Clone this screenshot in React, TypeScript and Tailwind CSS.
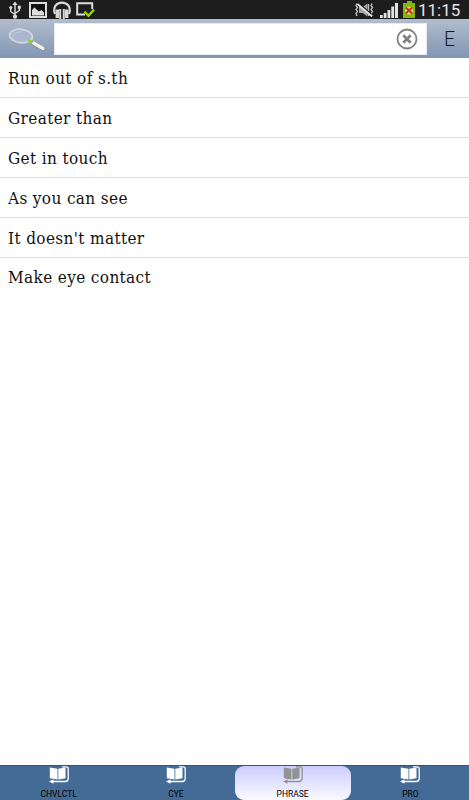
import clsx from 'clsx'

const phrases = [
    'Run out of s.th',
    'Greater than',
    'Get in touch',
    'As you can see',
    "It doesn't matter",
    'Make eye contact',
]

const tabs = [
    { label: 'CHVLCTL', active: false },
    { label: 'CYE', active: false },
    { label: 'PHRASE', active: true },
    { label: 'PRO', active: false },
]

const UsbIcon = () => (
    <svg width="12" height="18" viewBox="0 0 12 18" fill="none" stroke="#dedede" strokeWidth="1.4">
        <path d="M6 3v13M1.700 7v3.500L6 13.500M10.300 6v3.500L6 12.500" />
        <path d="M6 0.500l2.600 3.500H3.400z" fill="#dedede" stroke="none" />
        <circle cx="6" cy="15.700" r="2.100" fill="#dedede" stroke="none" />
        <circle cx="1.800" cy="6.500" r="1.600" fill="#dedede" stroke="none" />
        <path d="M8.800 4.700h3v3h-3z" fill="#dedede" stroke="none" />
    </svg>
)

const PictureIcon = () => (
    <svg width="18" height="16" viewBox="0 0 18 16">
        <path d="M1 1h16v14H1z" fill="#111" stroke="#dedede" strokeWidth="2" />
        <path d="M3 13.500V8l2.500-2.500L8 8l2 1.500L12.500 8l2.500 2.500v3z" fill="#dedede" />
    </svg>
)

const HeadphonesIcon = () => (
    <svg width="18" height="18" viewBox="0 0 18 18" fill="none" stroke="#d8d8d8">
        <path d="M2 13C-.5 6 3.500 1.600 9 1.600S18.500 6 16 13" strokeWidth="2.200" />
        <path d="M7.200 8v10M10.800 8v10" strokeWidth="2" />
        <path d="M4.300 8.500v8.500M13.700 8.500v8.500" strokeWidth="3.400" />
    </svg>
)

const ScreenCheckIcon = () => (
    <svg width="19" height="16" viewBox="0 0 19 16" fill="none">
        <path d="M9 12.500H1.200V1.200h15V7" stroke="#dedede" strokeWidth="2" />
        <path d="M8.500 9.500l4 4.300L18 7.500" stroke="#9bd400" strokeWidth="2.300" />
    </svg>
)

const MutedIcon = () => (
    <svg width="19" height="14" viewBox="0 0 19 14" fill="none" stroke="#c4c4c4">
        <path d="M4 4h3.500l5-3.500v13l-5-3.500H4z" fill="#a5a5a5" stroke="none" />
        <path d="M2 .5l-1 2 1.500 2-1.500 2 1.500 2-1.500 2 1 2.500" strokeWidth="1.300" />
        <path d="M17 .5l-1 2 1.500 2-1.500 2 1.500 2-1.500 2 1 2.500M13.500 1v12" strokeWidth="1.300" />
        <path d="M3.500 0l13 11.500" stroke="#1a1a1a" strokeWidth="1.600" />
        <path d="M2.500 1l14.500 12.500" stroke="#e4e4e4" strokeWidth="1.700" />
    </svg>
)

const SignalIcon = () => (
    <svg width="18" height="16" viewBox="0 0 18 16" fill="#e2e2e2">
        <path d="M0 13h2.700v3H0zM3.700 11h2.800v5H3.700zM7.500 8h2.800v8H7.500zM11.300 4.500h2.800V16h-2.800zM15 1h3v15h-3z" />
    </svg>
)

const BatteryIcon = () => (
    <svg width="12" height="17" viewBox="0 0 12 17">
        <path d="M4 0h5v2h3v15H0V2h4z" fill="#83b900" />
        <circle cx="6" cy="9.500" r="4" fill="#c7dc94" />
        <path d="M2.800 6.500l6.400 6M9.200 6.500l-6.400 6" stroke="#dd2617" strokeWidth="1.900" />
    </svg>
)

const MagnifierIcon = () => (
    <svg width="38" height="24" viewBox="0 0 38 24" fill="none">
        <ellipse cx="13" cy="8" rx="11.500" ry="6.700" fill="#a9b8d0" stroke="#d4d7da" strokeWidth="1.700" transform="rotate(6 13 8)" />
        <path d="M5 8c1-3 5-4.500 9-4" stroke="#c4cedd" />
        <path d="M25.500 15.500l9.500 5.500" stroke="#8b929c" strokeWidth="4.400" strokeLinecap="round" />
        <path d="M25.500 15l9.500 5.500" stroke="#f1f2f2" strokeWidth="3.200" strokeLinecap="round" />
        <path d="M20.500 12.300l3.800 2.400" stroke="#8bd41b" strokeWidth="2.800" />
    </svg>
)

const ClearIcon = () => (
    <svg width="22" height="22" viewBox="0 0 22 22" fill="none" stroke="#808080">
        <circle cx="11" cy="11" r="9.500" strokeWidth="1.800" />
        <path d="M7.300 7.300l7.400 7.400M14.700 7.300l-7.400 7.400" strokeWidth="2.700" />
    </svg>
)

const BookIcon = ({ active }: { active: boolean }) => (
    <svg width="20" height="18" viewBox="0 0 20 18" className={active ? 'text-[#929294]' : 'text-white'}>
        <path d="M.8 1.500l7.700 1.200v10.800L.8 12.300zM9.300 2.700l7.200-1.200v10.800l-7.200 1.200z" fill="currentColor" />
        <path d="M13 .9h4Q19.200 .9 19.200 3v9.500q0 3-3 3H3" fill="none" stroke="currentColor" strokeWidth="1.300" />
        <path d="M0 15.500l4.500-2.200v4.400z" fill="currentColor" />
    </svg>
)

const StatusBar = () => (
    <div className="flex h-[19px] shrink-0 items-center justify-between bg-[#1d1d1d] pr-2 pl-[9px]">
        <div className="flex items-center">
            <UsbIcon />
            <div className="ml-2 pt-px"><PictureIcon /></div>
            <div className="ml-[6px] pt-px"><HeadphonesIcon /></div>
            <div className="ml-[5px]"><ScreenCheckIcon /></div>
        </div>
        <div className="flex items-center">
            <MutedIcon />
            <div className="ml-[6px]"><SignalIcon /></div>
            <div className="ml-[5px]"><BatteryIcon /></div>
            <span className="ml-[3px] w-[43px] pt-px font-[Roboto] text-[17px] leading-[18px] whitespace-nowrap text-[#e4e4e4]">11:15</span>
        </div>
    </div>
)

const SearchBar = () => (
    <div className="flex h-[39px] shrink-0 items-center bg-linear-to-b from-[#b2bdce] via-[#9aa9c0] to-[#8196b4]">
        <div className="flex w-[54px] justify-center pt-0.5"><MagnifierIcon /></div>
        <div className="flex h-8 w-[373px] items-center justify-end border border-[#e7eaef] bg-white pr-2">
            <ClearIcon />
        </div>
        <div className="flex-1 pt-[3px] pl-[3px] text-center font-[Roboto] text-[19.500px] font-light text-[#141a20]">E</div>
    </div>
)

export default function App() {
    return (
        <div className="flex h-screen w-full flex-col overflow-hidden bg-white">
            <StatusBar />
            <SearchBar />
            <ul className="flex-1">
                {phrases.map((phrase) => (
                    <li
                        key={phrase}
                        className="flex h-10 items-center border-b border-[#dedede] pt-0.5 pl-2 font-['DejaVu_Serif_Condensed','DejaVu_Serif',serif] text-[17px] tracking-[0.37px] [font-stretch:condensed] whitespace-nowrap text-[#111] last:border-b-0 last:pt-0"
                    >
                        {phrase}
                    </li>
                ))}
            </ul>
            <nav className="grid h-[35px] shrink-0 grid-cols-4 border-t border-[#2b5984] bg-[#446b96]">
                {tabs.map((tab) => (
                    <div
                        key={tab.label}
                        className={clsx(
                            'flex flex-col items-center',
                            tab.active && 'mr-[1px] rounded-[9px] bg-linear-to-b from-[#cccdff] to-[#fafaff]',
                        )}
                    >
                        <BookIcon active={tab.active} />
                        <span className="mt-[5px] font-[Roboto] text-[8.500px] leading-[10px] text-black">{tab.label}</span>
                    </div>
                ))}
            </nav>
        </div>
    )
}
